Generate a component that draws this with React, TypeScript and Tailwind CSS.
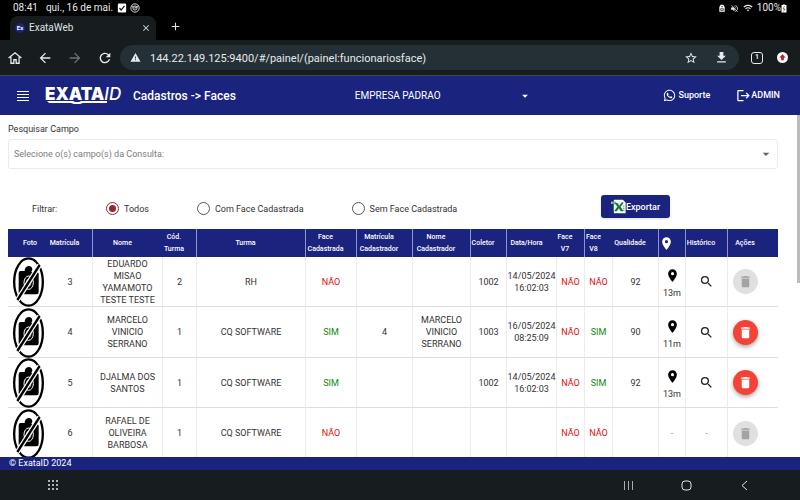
import type { ReactNode } from "react";
import {
  MdAdd,
  MdArrowBack,
  MdArrowDropDown,
  MdArrowForward,
  MdClose,
  MdDelete,
  MdFileDownload,
  MdLocationOn,
  MdLogout,
  MdRefresh,
  MdSearch,
  MdStarOutline,
  MdVolumeOff,
  MdWarning,
  MdWifi,
} from "react-icons/md";
import { FaWhatsapp } from "react-icons/fa";

type Face = "SIM" | "NÃO";

interface Employee {
  id: number;
  name: string;
  classCode: number;
  className: string;
  registered: Face;
  registrarId?: string;
  registrarName?: string;
  collector?: string;
  date?: string;
  time?: string;
  v7: Face;
  v8: Face;
  quality?: number;
  distance?: string;
  removable: boolean;
}

const employees: Employee[] = [
  { id: 3, name: "EDUARDO MISAO YAMAMOTO TESTE TESTE", classCode: 2, className: "RH", registered: "NÃO", collector: "1002", date: "14/05/2024", time: "16:02:03", v7: "NÃO", v8: "NÃO", quality: 92, distance: "13m", removable: false },
  { id: 4, name: "MARCELO VINICIO SERRANO", classCode: 1, className: "CQ SOFTWARE", registered: "SIM", registrarId: "4", registrarName: "MARCELO VINICIO SERRANO", collector: "1003", date: "16/05/2024", time: "08:25:09", v7: "NÃO", v8: "SIM", quality: 90, distance: "11m", removable: true },
  { id: 5, name: "DJALMA DOS SANTOS", classCode: 1, className: "CQ SOFTWARE", registered: "SIM", collector: "1002", date: "14/05/2024", time: "16:02:03", v7: "NÃO", v8: "SIM", quality: 92, distance: "13m", removable: true },
  { id: 6, name: "RAFAEL DE OLIVEIRA BARBOSA", classCode: 1, className: "CQ SOFTWARE", registered: "NÃO", v7: "NÃO", v8: "NÃO", removable: false },
];

const columns = [
  { label: "Foto", width: "w-[40px]", line: false },
  { label: "Matrícula", width: "w-[45px]", line: true },
  { label: "Nome", width: "w-[70px]", line: false },
  { label: "Cód. Turma", width: "w-[34px]", line: true },
  { label: "Turma", width: "w-[109px]", line: true },
  { label: "Face Cadastrada", width: "w-[51px]", line: true },
  { label: "Matrícula Cadastrador", width: "w-[56px]", line: true },
  { label: "Nome Cadastrador", width: "w-[58px]", line: true },
  { label: "Coletor", width: "w-[36px]", line: true },
  { label: "Data/Hora", width: "w-[50px]", line: false },
  { label: "Face V7", width: "w-[28px]", line: true },
  { label: "Face V8", width: "w-[28px]", line: false },
  { label: "Qualidade", width: "w-[46px]", line: true },
  { label: "Localização", width: "w-[27px]", line: true },
  { label: "Histórico", width: "w-[42px]", line: true },
  { label: "Ações", width: "w-[50px]", line: false },
];

function NoPhoto() {
  return (
    <svg viewBox="0 0 93 150" className="mx-auto block h-[50px] w-[31px]" role="img" aria-label="Sem foto">
      <ellipse cx="46.500" cy="75" rx="43" ry="71" fill="#fff" stroke="#000" strokeWidth="7" />
      <path d="M17 49q0-7 6-7h12q0-13 12-15 11 1 11 11l-3 7h16q6 0 6 6v55q0 6-6 6H23q-6 0-6-6z" fill="#000" />
      <ellipse cx="47" cy="77" rx="14" ry="20" fill="none" stroke="#fff" strokeWidth="3" />
      <ellipse cx="47" cy="77" rx="7" ry="11" fill="none" stroke="#fff" strokeWidth="2" />
      <path d="M13 129L80 24" stroke="#fff" strokeWidth="15" />
      <path d="M13 129L80 24" stroke="#000" strokeWidth="7" />
    </svg>
  );
}

function Cell({ children, line = true }: { children?: ReactNode; line?: boolean }) {
  return (
    <td className={`border-b border-b-[#dedede] p-0 text-center align-middle ${line ? "border-r border-r-[#ececec]" : ""}`}>
      {children}
    </td>
  );
}

function FaceStatus({ value }: { value: Face }) {
  return <span className={value === "SIM" ? "text-[#0b8a0b]" : "text-[#e01010]"}>{value}</span>;
}

function Row({ row }: { row: Employee }) {
  return (
    <tr className="odd:h-[50px] even:h-[51px]">
      <Cell line={false}>
        <div className="h-[49px]"><NoPhoto /></div>
      </Cell>
      <Cell>{row.id}</Cell>
      <Cell><div className="mx-auto w-[60px]">{row.name}</div></Cell>
      <Cell>{row.classCode}</Cell>
      <Cell>{row.className}</Cell>
      <Cell><FaceStatus value={row.registered} /></Cell>
      <Cell>{row.registrarId}</Cell>
      <Cell>{row.registrarName}</Cell>
      <Cell>{row.collector}</Cell>
      <Cell>{row.date}<br />{row.time}</Cell>
      <Cell><FaceStatus value={row.v7} /></Cell>
      <Cell><FaceStatus value={row.v8} /></Cell>
      <Cell>{row.quality}</Cell>
      <Cell>
        {row.distance ? (
          <div className="flex flex-col items-center gap-1 pt-1">
            <MdLocationOn className="size-[15px] text-black" />
            <span>{row.distance}</span>
          </div>
        ) : <span className="text-[#999]">-</span>}
      </Cell>
      <Cell>
        {row.distance ? (
          <button type="button" aria-label="Ver histórico" className="block w-full">
            <MdSearch className="mx-auto size-[15px] text-[#222]" />
          </button>
        ) : <span className="text-[#999]">-</span>}
      </Cell>
      <Cell line={false}>
        <button
          type="button"
          aria-label="Excluir"
          disabled={!row.removable}
          className={`mr-4 inline-flex size-[25px] items-center justify-center rounded-full align-middle ${
            row.removable ? "bg-[#f44336] text-white shadow-[0_2px_4px_rgba(0,0,0,0.35)]" : "bg-[#e0e0e0] text-[#a3a3a3]"
          }`}
        >
          <MdDelete className="size-[15px]" />
        </button>
      </Cell>
    </tr>
  );
}

function FilterOption({ label, checked = false }: { label: string; checked?: boolean }) {
  return (
    <label className="flex items-center gap-[5px]">
      <input
        type="radio"
        name="filtro"
        defaultChecked={checked}
        className="size-[13px] appearance-none rounded-full border border-[#555] bg-clip-content p-[2px] checked:border-[#98282d] checked:bg-[#98282d]"
      />
      {label}
    </label>
  );
}

function StatusBar() {
  return (
    <div className="flex h-4 items-center bg-black px-[13px] text-[10px] leading-[14px] text-[#e8e8e8]">
      <span>08:41</span>
      <span className="ml-2">qui., 16 de mai.</span>
      <svg viewBox="0 0 24 24" className="ml-1 size-[10px]">
        <rect x="2" y="1" width="20" height="22" rx="3" fill="#fff" />
        <path d="M6 12l4 5 8-10" fill="none" stroke="#111" strokeWidth="3" />
      </svg>
      <svg viewBox="0 0 24 24" className="ml-[3px] size-[10px]" fill="none" stroke="#fff" strokeWidth="2">
        <circle cx="12" cy="12" r="10" />
        <circle cx="12" cy="12" r="5" />
        <path d="M12 9v4l3-3M4 8l4 2M20 8l-4 2" />
      </svg>
      <div className="ml-auto flex items-center gap-1">
        <svg viewBox="0 0 24 24" className="size-2">
          <path d="M4 9l4-7h8l4 7v14H4z" fill="#fff" />
          <path d="M9 8h6M8 14h8v5H8z" stroke="#111" strokeWidth="2" fill="none" />
        </svg>
        <MdVolumeOff className="size-[9px]" />
        <MdWifi className="size-[10px]" />
        <span>100%</span>
      </div>
      <svg viewBox="0 0 12 18" className="h-[9px] w-[6px]">
        <path d="M3 2h2V0h2v2h4v15H1V2z" fill="#fff" />
        <path d="M7 4L4 10h4l-3 5" fill="none" stroke="#111" strokeWidth="1" />
      </svg>
    </div>
  );
}

function BrowserChrome() {
  return (
    <>
      <div className="flex h-6 items-end bg-black pl-[10px]">
        <div className="flex h-6 w-[146px] items-center rounded-t-lg bg-[#171c1f] px-[5px] text-[10px] leading-[14px] text-[#dfe3e5]">
          <span className="flex size-[10px] items-center justify-center rounded-full bg-[#1a237e] text-[6px] font-bold text-white">Ex</span>
          <span className="ml-1">ExataWeb</span>
          <button type="button" aria-label="Fechar guia" className="ml-auto"><MdClose className="size-[10px]" /></button>
        </div>
        <button type="button" aria-label="Nova guia" className="mb-[7px] ml-[13px] text-[#dfe3e5]"><MdAdd className="size-[13px]" /></button>
      </div>
      <div className="flex h-[35px] items-center bg-[#171c1f] pl-2 text-[#e6eaec]">
        <button type="button" aria-label="Início">
          <svg viewBox="0 0 24 24" className="size-[14px]" fill="none" stroke="currentColor" strokeWidth="2.200">
            <path d="M1 12L12 3l11 9M5 10v11h5v-6h4v6h5V10" />
          </svg>
        </button>
        <button type="button" aria-label="Voltar" className="ml-[15px]"><MdArrowBack className="size-4" /></button>
        <button type="button" aria-label="Avançar" className="ml-[14px] text-[#6c7376]"><MdArrowForward className="size-4" /></button>
        <button type="button" aria-label="Recarregar" className="ml-[14px]"><MdRefresh className="size-4" /></button>
        <div className="ml-[7px] flex h-[25px] flex-1 items-center rounded-full bg-[#243035] px-[10px]">
          <MdWarning className="size-[11px]" />
          <input
            aria-label="Endereço"
            defaultValue="144.22.149.125:9400/#/painel/(painel:funcionariosface)"
            className="ml-[9px] h-[25px] min-w-0 flex-1 bg-transparent pt-[2px] text-[11px] outline-none"
          />
          <button type="button" aria-label="Favoritar"><MdStarOutline className="size-[14px]" /></button>
          <button type="button" aria-label="Baixar" className="ml-4"><MdFileDownload className="size-[15px]" /></button>
        </div>
        <button type="button" aria-label="Guias abertas" className="ml-[12px] flex size-[12px] items-center justify-center rounded-[3px] border border-current text-[7px] font-bold">1</button>
        <button type="button" aria-label="Atualizar navegador" className="mr-3 ml-[14px]">
          <svg viewBox="0 0 24 24" className="size-[11px]">
            <circle cx="12" cy="12" r="12" fill="#fff" />
            <path d="M12 5l7 7h-4v6H9v-6H5z" fill="#b3262a" />
          </svg>
        </button>
      </div>
    </>
  );
}

function Logo() {
  return (
    <div className="ml-4 flex w-[80px] flex-col text-white" aria-label="Exata ID">
      <div className="flex items-baseline font-[Inter,sans-serif] text-[17px] leading-[14px]">
        <span className="font-black">EXATA</span>
        <span className="font-medium italic">ID</span>
      </div>
      <svg viewBox="0 0 62 3" className="h-[3px] w-[62px]">
        <path d="M2 0h26l2 1h4l2-1h26v2H38l-3 1h-6l-3-1H4z" fill="#fff" />
      </svg>
    </div>
  );
}

function AppHeader() {
  return (
    <header className="flex h-10 items-center border-t border-[#44484f] bg-[#1a237e] pr-5 pl-[17px] text-white">
      <button type="button" aria-label="Menu">
        <svg viewBox="0 0 12 10" className="h-[10px] w-[12px]" stroke="currentColor">
          <path d="M0 .5h12M0 3.500h12M0 6.500h12M0 9.500h12" />
        </svg>
      </button>
      <Logo />
      <h1 className="ml-2 text-[12px] leading-[14px] font-medium">Cadastros -&gt; Faces</h1>
      <div className="relative ml-[119px] w-[177px]">
        <select aria-label="Empresa" className="block h-[18px] w-full appearance-none bg-transparent text-[10px] leading-[14px] outline-none">
          <option>EMPRESA PADRAO</option>
        </select>
        <MdArrowDropDown className="pointer-events-none absolute top-1/2 right-0 size-[14px] -translate-y-1/2" />
      </div>
      <a href="#suporte" className="ml-auto flex items-center gap-[3px] text-[9px] font-medium">
        <FaWhatsapp className="size-[13px]" />Suporte
      </a>
      <button type="button" className="ml-[26px] flex items-center text-[9px] font-medium">
        <MdLogout className="size-[15px]" />ADMIN
      </button>
    </header>
  );
}

function ExcelIcon() {
  return (
    <svg viewBox="0 0 42 42" className="size-[15px]">
      <path d="M8 2h25l8 8v30H8z" fill="#fff" />
      <path d="M0 8h24v26H8V14H0z" fill="#e6efe8" />
      <path d="M10 11h8l5 8 6-9h7L27 22l8 12h-8l-5-8-6 8H9l9-12z" fill="#18753c" />
      <path d="M1 9h13M1 13h10M33 20h5M33 26h5M33 32h5" stroke="#18753c" strokeWidth="2" />
    </svg>
  );
}

export default function App() {
  return (
    <div className="flex h-screen flex-col overflow-hidden bg-white font-[Roboto,sans-serif] text-[#333]">
      <StatusBar />
      <BrowserChrome />
      <AppHeader />
      <main className="relative min-h-0 flex-1 overflow-hidden pr-[22px] pl-2 text-[9px] leading-[12px]">
        <label htmlFor="campo" className="block pt-2 pb-1">Pesquisar Campo</label>
        <div className="relative">
          <select id="campo" className="block h-[30px] w-full appearance-none rounded-[3px] border border-[#ebebeb] bg-white px-[5px] text-[#7d7d7d]">
            <option>Selecione o(s) campo(s) da Consulta:</option>
          </select>
          <MdArrowDropDown className="pointer-events-none absolute top-1/2 right-1 size-4 -translate-y-1/2 text-[#666]" />
        </div>
        <div className="mt-[26px] mb-[11px] flex items-center pl-6">
          <fieldset className="flex flex-1 items-center pt-1">
            <legend className="float-left w-[74px]">Filtrar:</legend>
            <div className="flex gap-12">
              <FilterOption label="Todos" checked />
              <FilterOption label="Com Face Cadastrada" />
              <FilterOption label="Sem Face Cadastrada" />
            </div>
          </fieldset>
          <button type="button" className="mr-[108px] flex h-[23px] w-[69px] items-center justify-center rounded-[3px] bg-[#1a237e] font-medium text-white shadow">
            <ExcelIcon />Exportar
          </button>
        </div>
        <table className="w-full table-fixed border-separate border-spacing-0">
          <thead>
            <tr className="h-7 bg-[#1a237e] text-[7px] text-white">
              {columns.map((c) => (
                <th
                  key={c.label}
                  scope="col"
                  className={`py-0 pl-0 align-middle font-medium whitespace-normal ${c.width} ${
                    c.line ? "border-r border-[#8f94c4]" : ""
                  } ${c.label === "Foto" ? "pr-0 pl-1" : c.label === "Ações" ? "pr-4" : "pr-[11px]"}`}
                >
                  {c.label === "Localização" ? (
                    <MdLocationOn className="mx-auto size-[15px]" aria-label={c.label} />
                  ) : (
                    <div className="flex justify-center">{c.label}</div>
                  )}
                </th>
              ))}
            </tr>
          </thead>
          <tbody>
            {employees.map((row) => <Row key={row.id} row={row} />)}
          </tbody>
        </table>
        <div className="absolute top-0 right-0 h-[168px] w-[3px] bg-[#bdbdbd]" />
      </main>
      <footer className="flex h-[13px] items-center bg-[#1a237e] px-[9px] text-[9px] text-white">© ExataID 2024</footer>
      <nav className="flex h-[30px] items-center bg-[#171c1f] text-[#dfe3e5]" aria-label="Sistema">
        <button type="button" aria-label="Aplicativos" className="ml-12">
          <svg viewBox="0 0 10 10" className="size-[10px]" fill="currentColor">
            {[1, 5, 9].map((y) => [1, 5, 9].map((x) => <circle key={`${x}-${y}`} cx={x} cy={y} r="1" />))}
          </svg>
        </button>
        <div className="mr-[50px] ml-auto flex items-center gap-[47px]">
          <button type="button" aria-label="Recentes">
            <svg viewBox="0 0 11 11" className="size-[11px]" stroke="#a9adaf"><path d="M1.500 1v9M5.500 1v9M9.500 1v9" /></svg>
          </button>
          <button type="button" aria-label="Início">
            <svg viewBox="0 0 11 11" className="size-[11px]" fill="none" stroke="currentColor"><rect x="1" y="1" width="9" height="9" rx="3" /></svg>
          </button>
          <button type="button" aria-label="Voltar">
            <svg viewBox="0 0 11 11" className="size-[11px]" fill="none" stroke="currentColor"><path d="M8 1L3 5.500 8 10" /></svg>
          </button>
        </div>
      </nav>
    </div>
  );
}
